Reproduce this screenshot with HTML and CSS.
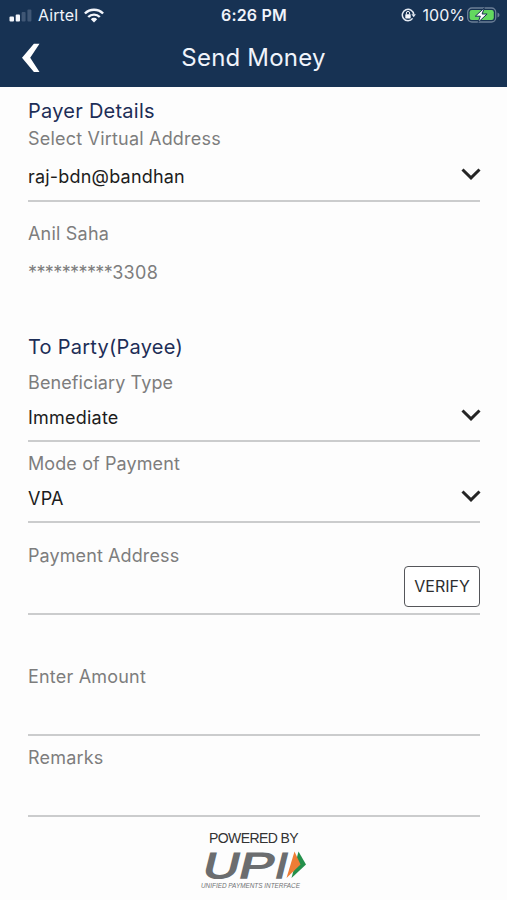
FILE: index.html
```html
<!DOCTYPE html>
<html lang="en">
<head>
<meta charset="utf-8">
<title>Send Money</title>
<link rel="stylesheet" href="styles.css">
</head>
<body>
<header class="header">
  <div class="status">
    <div class="status-left">
      <svg width="23" height="13" viewBox="0 0 23 13"><g fill="#f3f6fc"><rect x="0.5" y="7.5" width="4.5" height="5" rx="1"/><rect x="6.7" y="5.4" width="4.3" height="7.1" rx="1"/></g><g fill="#405775"><rect x="12.6" y="3" width="4" height="9.5" rx="1"/><rect x="18.4" y="0.5" width="4" height="12" rx="1"/></g></svg>
      <span class="carrier">Airtel</span>
      <svg class="wifi" width="20" height="15" viewBox="0 0 20 15"><g fill="none" stroke="#f3f6fc" stroke-width="2.4"><path d="M0.9 5.5a12.8 12.8 0 0 1 18.2 0"/><path d="M4.2 9a8.2 8.2 0 0 1 11.6 0"/></g><path fill="#f3f6fc" d="M6.8 11.2a4.5 4.5 0 0 1 6.4 0L10 14.6z"/></svg>
    </div>
    <span class="clock">6:26 PM</span>
    <div class="status-right">
      <svg width="15" height="14" viewBox="0 0 15 14"><path d="M11.6 10.4A5.7 5.7 0 1 1 12.7 6.4" fill="none" stroke="#e4eaf3" stroke-width="1.5"/><path d="M10.4 6.2h4.5l-2.2 3z" fill="#e4eaf3"/><rect x="4.3" y="6.2" width="5.4" height="4.2" rx=".6" fill="#f3f6fc"/><path d="M5.4 6.4V5a1.6 1.6 0 0 1 3.2 0v1.4" fill="none" stroke="#f3f6fc"/></svg>
      <span class="percent">100%</span>
      <svg class="battery" width="33" height="17" viewBox="0 0 33 17"><rect x=".7" y="1" width="28" height="14" rx="4.2" fill="none" stroke="#6c7f97" stroke-width="1.3"/><rect x="2.6" y="3" width="24.2" height="10" rx="2.2" fill="#63d85f"/><path d="M30.5 5.5v5q2-.8 2-2.5t-2-2.5z" fill="#6c7f97"/><path d="M17.4.8 8.3 9.2h5l-2.2 6.2 9-8.4h-5z" fill="#fff" stroke="#173253" stroke-width="1"/></svg>
    </div>
  </div>
  <div class="navbar">
    <svg class="back" width="18" height="30" viewBox="0 0 18 30"><path d="M11.9.8h5.6L8.2 14.7 17.5 29h-5.6L0 14.7z" fill="#fff"/></svg>
    <h1 class="title">Send Money</h1>
  </div>
</header>
<main class="form">
  <h2 class="section">Payer Details</h2>
  <div class="field address">
    <div class="label">Select Virtual Address</div>
    <div class="select"><span class="vpa-id">raj-bdn@bandhan</span><svg class="chevron" width="20" height="14" viewBox="0 0 20 14"><path d="M1.5 2.5 10 10.8 18.5 2.5" fill="none" stroke="#252525" stroke-width="3"/></svg></div>
  </div>
  <div class="label holder">Anil Saha</div>
  <div class="label account"><span class="mask">**********</span>3308</div>
  <h2 class="section payee">To Party(Payee)</h2>
  <div class="field beneficiary">
    <div class="label tight">Beneficiary Type</div>
    <div class="select"><span class="value">Immediate</span><svg class="chevron" width="20" height="14" viewBox="0 0 20 14"><path d="M1.5 2.5 10 10.8 18.5 2.5" fill="none" stroke="#252525" stroke-width="3"/></svg></div>
  </div>
  <div class="field mode">
    <div class="label tight">Mode of Payment</div>
    <div class="select"><span class="value">VPA</span><svg class="chevron" width="20" height="14" viewBox="0 0 20 14"><path d="M1.5 2.5 10 10.8 18.5 2.5" fill="none" stroke="#252525" stroke-width="3"/></svg></div>
  </div>
  <div class="field payment">
    <div class="label tight">Payment Address</div>
    <button class="verify">VERIFY</button>
  </div>
  <div class="field amount"><div class="label">Enter Amount</div></div>
  <div class="field remarks"><div class="label">Remarks</div></div>
</main>
<footer class="footer">
  <div class="powered">POWERED BY</div>
  <svg class="upi" width="120" height="46" viewBox="-10 0 120 46">
    <g class="upi-name" transform="translate(1 31) skewX(-14)">
      <text x="0" y="0" textLength="36" lengthAdjust="spacingAndGlyphs">U</text>
      <text x="36" y="0" textLength="35" lengthAdjust="spacingAndGlyphs">P</text>
      <text x="72" y="0" textLength="12" lengthAdjust="spacingAndGlyphs">I</text>
    </g>
    <path d="m98.5 4.5 7.5 13L91.5 31z" fill="#24904b"/>
    <path d="m94.5 4.5 6 13L86.5 31z" fill="#ef7d35"/>
    <text class="upi-sub" x="1" y="40.5" textLength="99" lengthAdjust="spacingAndGlyphs">UNIFIED PAYMENTS INTERFACE</text>
  </svg>
</footer>
</body>
</html>
```
FILE: styles.css
```css
* { box-sizing: border-box; }
body {
  margin: 0;
  height: 900px;
  overflow: hidden;
  background: #fdfdfd;
  font-family: Inter, "Liberation Sans", sans-serif;
}
svg { display: block; flex: none; }
h1, h2 { margin: 0; font-weight: 400; }
.header { height: 87px; background: #173253; color: #f0f4fb; }
.status {
  display: grid;
  grid-template-columns: 1fr auto 1fr;
  align-items: center;
  height: 30px;
  padding: 0 8px 0 9px;
}
.status-left, .status-right { display: flex; align-items: center; }
.status-right { justify-content: flex-end; margin-right: -1px; }
.carrier { margin-left: 6px; font-size: 16px; letter-spacing: .1px; }
.wifi { margin-left: 6px; }
.clock { font-size: 16px; font-weight: 600; letter-spacing: .2px; }
.percent { margin: 0 2px 0 7px; font-size: 16px; }
.navbar {
  display: grid;
  grid-template-columns: 18px 1fr 18px;
  align-items: center;
  height: 55px;
  padding: 0 22px;
}
.title { font-size: 24px; line-height: 32px; text-align: center; letter-spacing: .2px; }
.form { padding: 9.5px 27px 0 28px; }
.section { color: #1d2e57; font-size: 20px; line-height: 28px; letter-spacing: .25px; }
.label { color: #7d7d7d; font-size: 18px; line-height: 28px; letter-spacing: .2px; }
.tight { letter-spacing: .1px; }
.mask { letter-spacing: -.6px; }
.account { letter-spacing: .3px; }
.field { border-bottom: 2px solid #cbcccd; }
.select {
  display: flex;
  align-items: center;
  justify-content: space-between;
  color: #1c1c1c;
  font-size: 18px;
  line-height: 28px;
}
.vpa-id { letter-spacing: .2px; }
.value { letter-spacing: .22px; }
.chevron { margin-right: -1px; margin-top: -7px; }
.address { height: 77.5px; }
.address .select { margin-top: 10.5px; }
.holder { margin-top: 18px; }
.account { margin-top: 11px; }
.payee { margin-top: 46px; }
.beneficiary { height: 81px; padding-top: 8px; }
.beneficiary .select { margin-top: 7px; }
.mode { height: 81px; padding-top: 8px; }
.mode .select { margin-top: 7px; }
.payment { height: 92px; padding-top: 18.5px; }
.verify {
  display: block;
  width: 76px;
  height: 41px;
  margin: -4px 0 0 auto;
  padding: 0;
  border: 1.5px solid #55565a;
  border-radius: 4px;
  background: #fff;
  color: #2d2d2f;
  font: 16px/39px Inter, sans-serif;
}
.amount { height: 121px; padding-top: 48px; }
.remarks { height: 81px; padding-top: 8px; }
.footer { padding: 12px 0 0 190px; }
.powered { margin-left: 19px; color: #333; font: 14px/18px "Liberation Sans", sans-serif; letter-spacing: -.6px; }
.upi-name {
  fill: #6b6d6f;
  stroke: #6b6d6f;
  stroke-width: 1.5;
  font: 36px "Liberation Sans", sans-serif;
}
.upi-sub { fill: #707274; font: italic 7px "Liberation Sans", sans-serif; }
```
